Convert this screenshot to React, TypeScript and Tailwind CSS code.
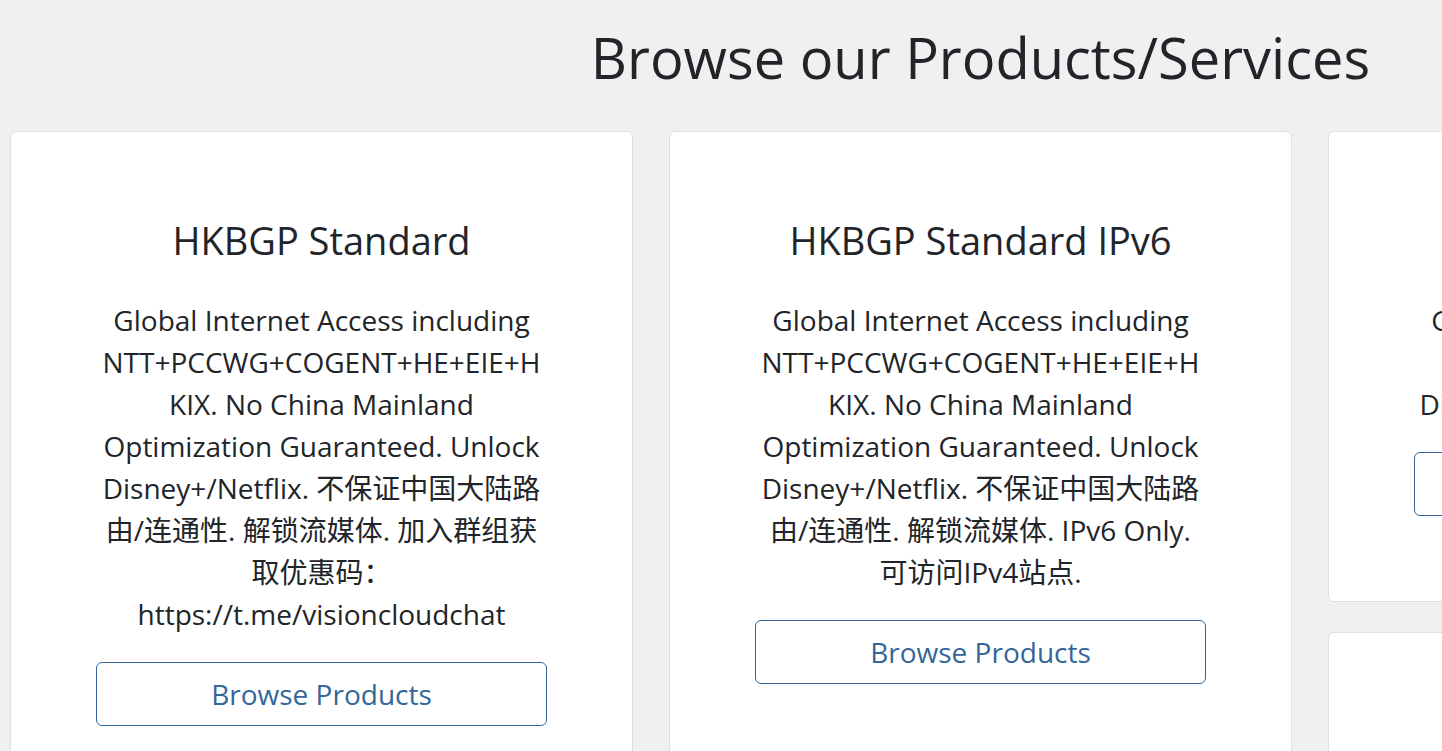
import React from 'react'

type Product = {
  name: string
  description: string
}

// 商品分组 — 三列瀑布流
const COLUMNS: Product[][] = [
  [
    {
      name: 'HKBGP Standard',
      description:
        'Global Internet Access including NTT+PCCWG+COGENT+HE+EIE+HKIX. No China Mainland Optimization Guaranteed. Unlock Disney+/Netflix. 不保证中国大陆路由/连通性. 解锁流媒体. 加入群组获取优惠码： https://t.me/visioncloudchat',
    },
  ],
  [
    {
      name: 'HKBGP Standard IPv6',
      description:
        'Global Internet Access including NTT+PCCWG+COGENT+HE+EIE+HKIX. No China Mainland Optimization Guaranteed. Unlock Disney+/Netflix. 不保证中国大陆路由/连通性. 解锁流媒体. IPv6 Only. 可访问IPv4站点.',
    },
  ],
  [
    {
      name: 'HKBGP Premium',
      description: 'Global Internet Access including CN2 GIA Optimized. Disney+/Netflix. 解锁流媒体. 优化+',
    },
    {
      name: 'HKBGP Premium IPv6',
      description:
        'Global Internet Access including CN2 GIA Optimized. Unlock Disney+/Netflix. 解锁流媒体. IPv6 Only.',
    },
  ],
]

function ProductCard({ product }: { product: Product }) {
  return (
    <div className="bg-white border border-[#dfdfdf] rounded-[6px] p-[85px] text-center text-[#212529]">
      <h3 className="text-[38px] leading-[46px] mb-[36px]">{product.name}</h3>
      <p className="text-[28px] leading-[42px] break-words">{product.description}</p>
      <button className="mt-[27px] w-full h-[64px] border border-[#336699] rounded-[6px] text-[28px] text-[#336699] bg-white">
        Browse Products
      </button>
    </div>
  )
}

export default function App() {
  return (
    <div
      className="w-[1442px] h-[751px] overflow-hidden bg-[#f0f0f0]"
      style={{ fontFamily: '"Open Sans", "Noto Sans CJK SC", sans-serif' }}
    >
      <div className="w-[1961px] px-[10px]">
        <h1 className="text-[56px] leading-[67px] text-center text-[#212529] pt-[24px] pb-[40px]">
          Browse our Products/Services
        </h1>
        <div className="grid grid-cols-3 gap-[36px] items-start">
          {COLUMNS.map((col, i) => (
            <div key={i} className="flex flex-col gap-[30px]">
              {col.map((p) => (
                <ProductCard key={p.name} product={p} />
              ))}
            </div>
          ))}
        </div>
      </div>
    </div>
  )
}
